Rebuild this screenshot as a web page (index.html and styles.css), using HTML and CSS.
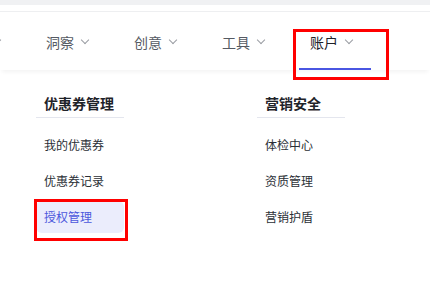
FILE: index.html
```html
<!DOCTYPE html>
<html lang="zh-CN">
<head>
    <meta charset="UTF-8">
    <meta name="viewport" content="width=device-width, initial-scale=1.0">
    <title>账户菜单</title>
    <link rel="stylesheet" href="styles.css">
</head>
<body>
    <div class="top-band"></div>
    <div class="header">
        <div class="nav">
            <div class="nav-item"><span class="blank"></span><i class="chev"></i></div>
            <div class="nav-item"><span>洞察</span><i class="chev"></i></div>
            <div class="nav-item"><span>创意</span><i class="chev"></i></div>
            <div class="nav-item"><span>工具</span><i class="chev"></i></div>
            <div class="nav-item active">
                <span>账户</span><i class="chev"></i>
                <div class="mark mark-nav"></div>
            </div>
        </div>
    </div>

    <div class="dropdown">
        <div class="group group-left">
            <div class="group-title">优惠券管理</div>
            <div class="menu-item">我的优惠券</div>
            <div class="menu-item">优惠券记录</div>
            <div class="menu-item selected">
                授权管理
                <div class="mark mark-item"></div>
            </div>
        </div>
        <div class="group group-right">
            <div class="group-title">营销安全</div>
            <div class="menu-item">体检中心</div>
            <div class="menu-item">资质管理</div>
            <div class="menu-item">营销护盾</div>
        </div>
    </div>
</body>
</html>
```

FILE: styles.css
```css
body {
    margin: 0;
    padding: 0;
    background-color: #fff;
    font-family: "Noto Sans CJK SC", "Noto Sans", sans-serif;
    color: #1f2329;
    width: 430px;
    height: 294px;
    overflow: hidden;
}
.top-band {
    height: 5px;
    background-color: #f0f1f3;
}
.header {
    margin-top: 6px;
    border-top: 1px solid #eeeff1;
    height: 58px;
    box-shadow: 0 4px 4px -2px rgba(0, 0, 0, 0.05);
    position: relative;
}
.nav {
    display: flex;
    gap: 16px;
    margin-left: -53px;
    height: 100%;
}
.nav-item {
    position: relative;
    width: 72px;
    box-sizing: border-box;
    padding-left: 11px;
    padding-top: 20px;
    display: flex;
    align-items: flex-start;
    font-size: 14px;
    line-height: 20px;
    color: #555a63;
}
.blank {
    width: 28px;
    height: 20px;
}
.chev {
    width: 5px;
    height: 5px;
    border-right: 1px solid #9a9da3;
    border-bottom: 1px solid #9a9da3;
    transform: rotate(45deg);
    margin-left: 8px;
    margin-top: 5px;
}
.nav-item.active {
    color: #1d2129;
    border-bottom: 2px solid #4a56e2;
}
.mark {
    position: absolute;
    border: 3px solid #ff0000;
    pointer-events: none;
}
.mark-nav {
    left: -6px;
    right: -18px;
    top: 17px;
    height: 45px;
}

/* dropdown panel */
.dropdown {
    display: flex;
    padding: 19px 0 0 36px;
    gap: 133px;
}
.group {
    width: 88px;
}
.group-title {
    height: 28px;
    line-height: 28px;
    padding-left: 8px;
    font-size: 14px;
    font-weight: bold;
    color: #1f2329;
    border-bottom: 1px solid #e4e6ee;
    margin-bottom: 11px;
}
.menu-item {
    position: relative;
    height: 32px;
    line-height: 32px;
    padding-left: 8px;
    margin-bottom: 4px;
    font-size: 12px;
    color: #2b2f36;
    border-radius: 6px;
}
.menu-item.selected {
    background-color: #ebedfc;
    color: #4b58dc;
}
.mark-item {
    left: -2px;
    right: -4px;
    top: -2px;
    bottom: -8px;
}
```
